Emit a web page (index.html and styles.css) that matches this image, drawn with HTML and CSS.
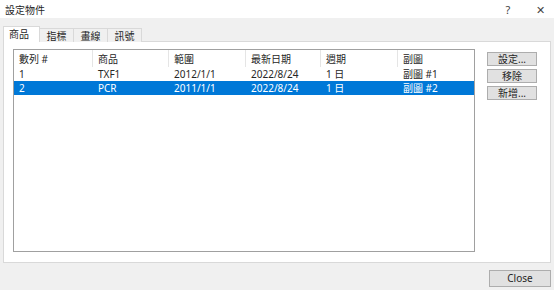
FILE: index.html
```html
<!DOCTYPE html>
<html lang="zh-Hant">
<head>
    <meta charset="UTF-8">
    <title>設定物件</title>
    <link rel="stylesheet" href="styles.css">
</head>
<body>
    <div class="titlebar">
        <span class="title">設定物件</span>
        <span class="help">?</span>
        <span class="close-x">✕</span>
    </div>
    <div class="main">
        <div class="tabs">
            <div class="tab active">商品</div>
            <div class="tab">指標</div>
            <div class="tab">畫線</div>
            <div class="tab">訊號</div>
        </div>
        <div class="panel">
            <div class="listview">
                <div class="row header">
                    <div class="cell c1">數列 #</div>
                    <div class="cell c2">商品</div>
                    <div class="cell c3">範圍</div>
                    <div class="cell c4">最新日期</div>
                    <div class="cell c5">週期</div>
                    <div class="cell c6">副圖</div>
                </div>
                <div class="row">
                    <div class="cell c1">1</div>
                    <div class="cell c2">TXF1</div>
                    <div class="cell c3">2012/1/1</div>
                    <div class="cell c4">2022/8/24</div>
                    <div class="cell c5">1 日</div>
                    <div class="cell c6">副圖 #1</div>
                </div>
                <div class="row selected">
                    <div class="cell c1">2</div>
                    <div class="cell c2">PCR</div>
                    <div class="cell c3">2011/1/1</div>
                    <div class="cell c4">2022/8/24</div>
                    <div class="cell c5">1 日</div>
                    <div class="cell c6">副圖 #2</div>
                </div>
            </div>
            <div class="side-buttons">
                <button class="btn">設定...</button>
                <button class="btn">移除</button>
                <button class="btn">新增...</button>
            </div>
        </div>
        <div class="footer">
            <button class="btn close-btn">Close</button>
        </div>
    </div>
</body>
</html>
```

FILE: styles.css
```css
body {
    margin: 0;
    width: 554px;
    height: 290px;
    overflow: hidden;
    background: #f0f0f0;
    font-family: "Noto Sans", "Noto Sans CJK TC", sans-serif;
    font-size: 10px;
    color: #262626;
}
.titlebar {
    height: 18px;
    background: #fff;
    display: flex;
    align-items: center;
}
.title {
    margin-left: 5px;
    flex: 1;
}
.help {
    width: 12px;
    margin-right: 20px;
    text-align: center;
    font-size: 11px;
    color: #444;
}
.close-x {
    width: 12px;
    margin-right: 8px;
    text-align: center;
    font-size: 11px;
    color: #444;
}
.main {
    padding: 8px 3px 0 3px;
}
.tabs {
    display: flex;
    align-items: flex-end;
    height: 16px;
    position: relative;
    z-index: 1;
    margin-bottom: -1px;
}
.tab {
    height: 13px;
    line-height: 14px;
    width: 33px;
    text-align: center;
    border: 1px solid #d9d9d9;
    border-bottom: none;
    margin-left: -1px;
    background: #f0f0f0;
}
.tab.active {
    margin-left: 0;
    width: 37px;
    height: 16px;
    line-height: 15px;
    background: #fff;
    text-align: left;
    padding-left: 5px;
    box-sizing: border-box;
}
.panel {
    background: #fff;
    border: 1px solid #d9d9d9;
    height: 213px;
    padding: 7px 0 0 9px;
    display: flex;
}
.listview {
    width: 460px;
    height: 201px;
    border: 1px solid #a0a0a0;
}
.row {
    display: flex;
    height: 14px;
    line-height: 14px;
}
.row.header {
    height: 17px;
    line-height: 19px;
}
.row.header .cell {
    border-right: 1px solid #e5e5e5;
}
.row.selected {
    background: #0078d7;
    color: #fff;
}
.cell {
    padding-left: 5px;
    box-sizing: border-box;
    white-space: nowrap;
}
.c1 { width: 79px; }
.c2 { width: 76px; }
.c3 { width: 77px; }
.c4 { width: 75px; }
.c5 { width: 77px; }
.c6 { width: 76px; }
.row.header .c6 { border-right: none; }
.side-buttons {
    display: flex;
    flex-direction: column;
    gap: 3px;
    margin-left: 12px;
    padding-top: 3px;
}
.btn {
    width: 50px;
    height: 14px;
    padding: 0;
    font-family: inherit;
    font-size: 10px;
    line-height: 12px;
    background: #e1e1e1;
    border: 1px solid #adadad;
    color: #262626;
}
.footer {
    display: flex;
    justify-content: flex-end;
    padding-top: 7px;
}
.close-btn {
    width: 62px;
    height: 17px;
    line-height: 15px;
}
```
